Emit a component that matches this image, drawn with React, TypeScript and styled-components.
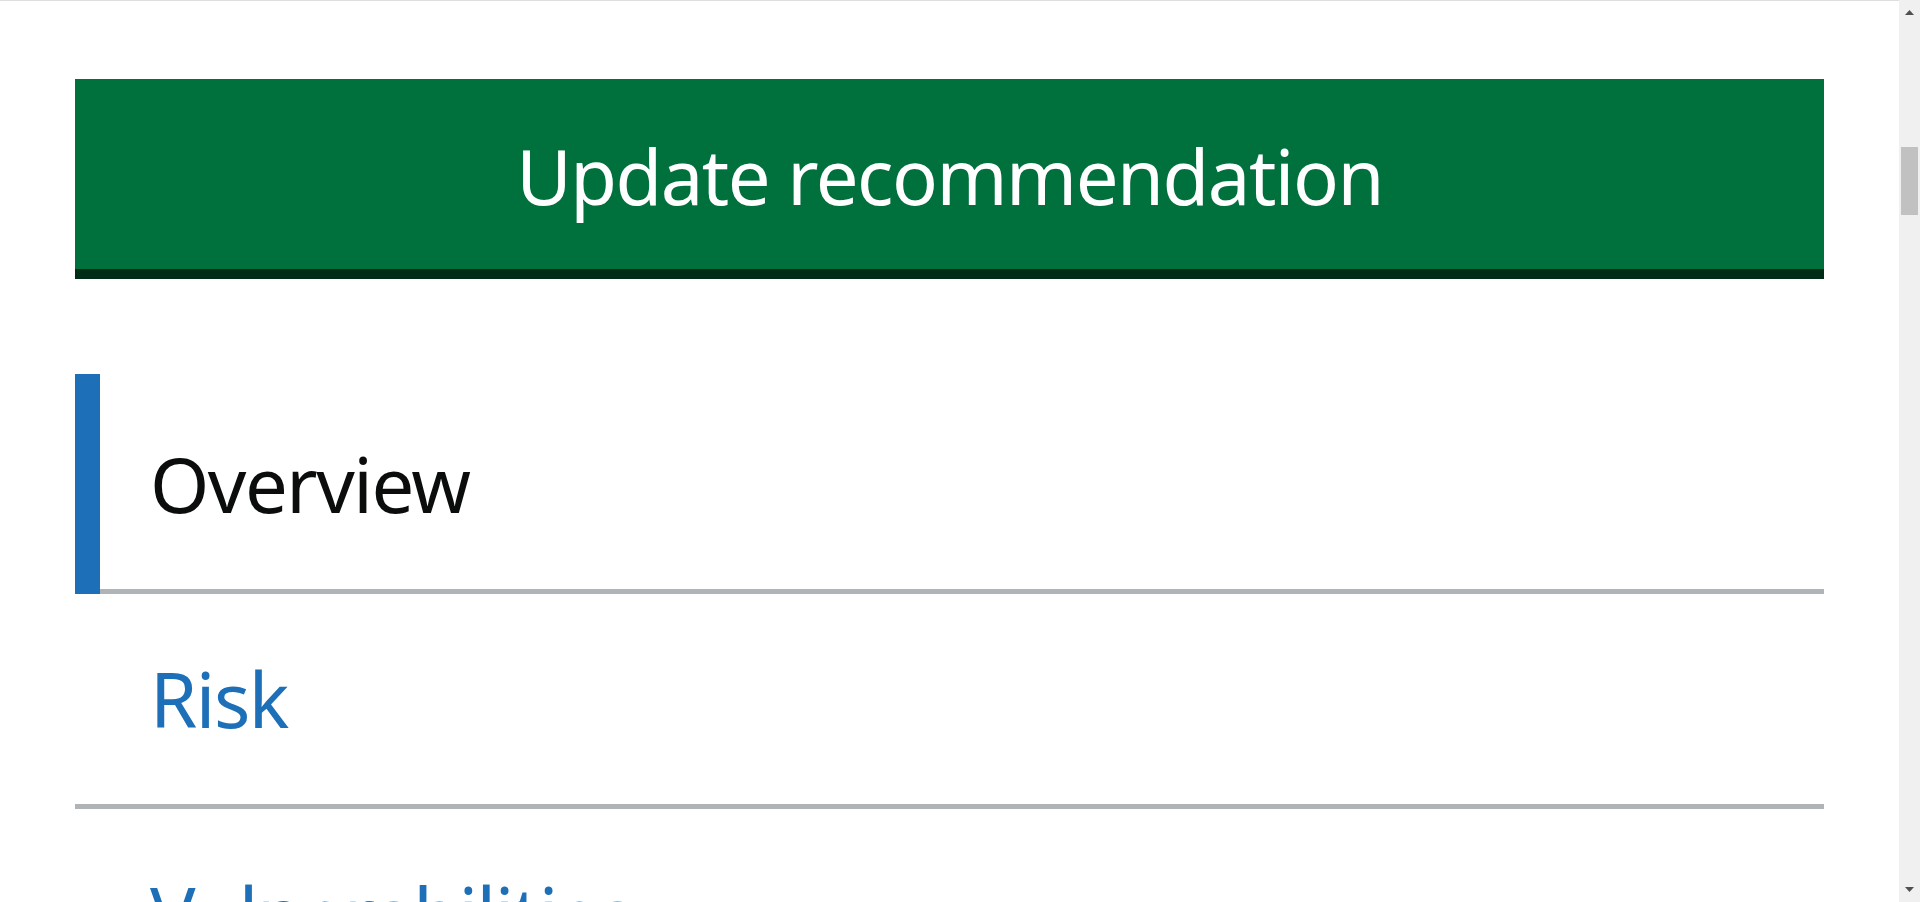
import styled, { createGlobalStyle } from "styled-components";

const GlobalStyle = createGlobalStyle`
  html, body {
    margin: 0;
    padding: 0;
    height: 100%;
    overflow: hidden;
    background: #ffffff;
  }
  #root {
    height: 100%;
  }
`;

const navItems = [
  { label: "Overview", active: true },
  { label: "Risk", active: false },
  { label: "Vulnerabilities", active: false },
  { label: "Recommendations", active: false },
];

export default function App() {
  return (
    <>
      <GlobalStyle />
      <Shell>
        <Main>
          <ActionButton type="button">Update recommendation</ActionButton>
          <SubNav>
            {navItems.map((item, i) => (
              <NavItem key={item.label} $active={item.active} $first={i === 0}>
                {item.active ? (
                  <CurrentLabel>{item.label}</CurrentLabel>
                ) : (
                  <NavLink href="#">{item.label}</NavLink>
                )}
              </NavItem>
            ))}
          </SubNav>
        </Main>
        <Scrollbar>
          <ArrowButton>
            <svg width="9" height="5" viewBox="0 0 9 5">
              <polygon points="4.5,0 9,5 0,5" fill="#505050" />
            </svg>
          </ArrowButton>
          <Track>
            <Thumb />
          </Track>
          <ArrowButton>
            <svg width="9" height="5" viewBox="0 0 9 5">
              <polygon points="0,0 9,0 4.5,5" fill="#505050" />
            </svg>
          </ArrowButton>
        </Scrollbar>
      </Shell>
    </>
  );
}

const Shell = styled.div`
  display: flex;
  height: 100vh;
  overflow: hidden;
  font-family: "Noto Sans", "Open Sans", Arial, sans-serif;
`;

const Main = styled.main`
  flex: 1;
  min-width: 0;
  border-top: 1px solid #dedede;
  padding: 78px 75px 0;
  overflow: hidden;
`;

const ActionButton = styled.button`
  display: flex;
  align-items: center;
  justify-content: center;
  width: 100%;
  height: 190px;
  margin: 0 0 105px;
  padding: 3px 0 0;
  border: 0;
  background: #00703c;
  box-shadow: 0 10px 0 #002d18;
  color: #ffffff;
  font-family: inherit;
  font-size: 76px;
  letter-spacing: -1.5px;
  line-height: 1;
  cursor: pointer;
`;

const SubNav = styled.ul`
  list-style: none;
  margin: 0;
  padding: 0;
`;

const NavItem = styled.li<{ $active: boolean; $first: boolean }>`
  position: relative;
  display: flex;
  align-items: center;
  box-sizing: border-box;
  height: ${(p) => (p.$first ? "220px" : "215px")};
  padding: 0 0 0 75px;
  border-top: ${(p) => (p.$first ? "5px solid transparent" : "0")};
  border-bottom: 5px solid #b1b4b6;
  font-size: 76px;
  letter-spacing: -1.5px;
  line-height: 1.2;

  &::before {
    content: "";
    display: ${(p) => (p.$active ? "block" : "none")};
    position: absolute;
    left: 0;
    top: -5px;
    bottom: -5px;
    width: 25px;
    background: #1d70b8;
  }
`;

const CurrentLabel = styled.span`
  color: #0b0c0c;
`;

const NavLink = styled.a`
  color: #1d70b8;
  text-decoration: none;
`;

const Scrollbar = styled.div`
  display: flex;
  flex-direction: column;
  width: 21px;
  flex-shrink: 0;
  background: #f0f0f0;
`;

const ArrowButton = styled.div`
  display: flex;
  align-items: center;
  justify-content: center;
  height: 25px;
`;

const Track = styled.div`
  flex: 1;
  padding: 122px 2px 0;
`;

const Thumb = styled.div`
  height: 68px;
  background: #c1c1c1;
`;
